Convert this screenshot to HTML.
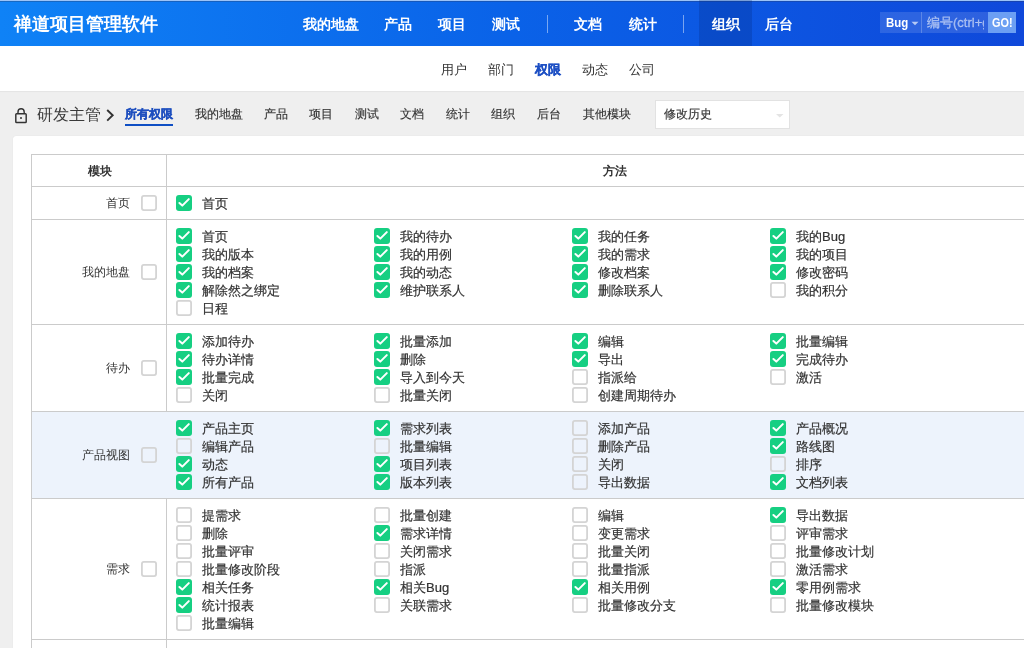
<!DOCTYPE html>
<html><head><meta charset="utf-8">
<style>
*{margin:0;padding:0;box-sizing:border-box}
html,body{width:1024px;height:648px;overflow:hidden;background:#efefef;font-family:"Liberation Sans",sans-serif;color:#333}
.a{position:absolute;white-space:nowrap}
#hdr{position:absolute;left:0;top:0;width:1024px;height:46px;background:linear-gradient(90deg,#0f82f6 0%,#0a62e8 50%,#0f48da 100%)}
#hdr .top1{position:absolute;left:0;top:0;width:1024px;height:1px;background:#9cc3f7}
#hdr .top2{position:absolute;left:0;top:1px;width:1024px;height:1px;background:rgba(40,60,100,.35)}
.brand{position:absolute;left:14px;top:13px;font-size:18px;font-weight:bold;color:#fff;line-height:22px}
.nav{position:absolute;top:15px;font-size:14px;font-weight:bold;color:#fff;line-height:18px}
.sep{position:absolute;top:15px;width:1px;height:18px;background:rgba(255,255,255,.45)}
.act{position:absolute;left:699px;top:0;width:53px;height:46px;background:rgba(0,30,110,.22)}
#sub{position:absolute;left:0;top:46px;width:1024px;height:45px;background:#fff;box-shadow:0 1px 1px rgba(0,0,0,.04)}
.sn{position:absolute;top:61px;font-size:13px;line-height:17px;color:#333}
.sn.on{color:#1e50c4;font-weight:bold;-webkit-text-stroke:.3px #1e50c4}
.tb{position:absolute;top:106px;font-size:12px;line-height:16px;color:#333;-webkit-text-stroke:.15px #333}
.tb.on{color:#1e4fbf;font-weight:bold;-webkit-text-stroke:.3px #1e4fbf}
.panel{position:absolute;left:13px;top:136px;width:1100px;height:600px;background:#fff;border-radius:3px;box-shadow:0 0 1px rgba(0,0,0,.12)}
.tbl{position:absolute;left:31px;top:154px;width:1100px;height:600px;border-left:1px solid #cbcbcb;border-top:1px solid #cbcbcb}
.vl{position:absolute;left:166px;top:154px;width:1px;height:600px;background:#cbcbcb}
.hl{position:absolute;left:31px;width:1100px;height:1px;background:#cbcbcb}
.rowbg{position:absolute;left:32px;width:1100px;background:#edf3fc}
.cb{position:absolute;width:16px;height:16px;display:block}
.cb.ck{border:0}
.cb svg{display:block}
.it{position:absolute;font-size:13px;line-height:18px;color:#333;white-space:nowrap;-webkit-text-stroke:.2px #333}
.mlab{position:absolute;right:894px;font-size:12px;line-height:18px;color:#333;white-space:nowrap}
.th{position:absolute;top:162px;font-size:12px;font-weight:bold;line-height:18px;color:#333}
#wrap{position:absolute;left:0;top:0;width:1024px;height:648px;overflow:hidden;will-change:transform}
</style></head><body><div id="wrap">
<div id="hdr"><div class="top1"></div><div class="top2"></div>
<div class="act"></div>
<div class="brand">禅道项目管理软件</div>
<div class="nav" style="left:303px">我的地盘</div>
<div class="nav" style="left:384px">产品</div>
<div class="nav" style="left:438px">项目</div>
<div class="nav" style="left:492px">测试</div>
<div class="sep" style="left:547px"></div>
<div class="nav" style="left:574px">文档</div>
<div class="nav" style="left:629px">统计</div>
<div class="sep" style="left:683px"></div>
<div class="nav" style="left:712px">组织</div>
<div class="nav" style="left:765px">后台</div>
</div>
<div id="sub"></div>
<div class="sn" style="left:441px">用户</div>
<div class="sn" style="left:488px">部门</div>
<div class="sn on" style="left:535px">权限</div>
<div class="sn" style="left:582px">动态</div>
<div class="sn" style="left:629px">公司</div>

<div class="tb" style="left:37px;top:105px;font-size:16px;line-height:20px;color:#3a3a3a;-webkit-text-stroke:0">研发主管</div>
<div class="tb on" style="left:125px">所有权限</div>
<div class="a" style="left:125px;top:124px;width:48px;height:2px;background:#0f4fc4"></div>
<div class="tb" style="left:195px">我的地盘</div>
<div class="tb" style="left:264px">产品</div>
<div class="tb" style="left:309px">项目</div>
<div class="tb" style="left:355px">测试</div>
<div class="tb" style="left:400px">文档</div>
<div class="tb" style="left:446px">统计</div>
<div class="tb" style="left:491px">组织</div>
<div class="tb" style="left:537px">后台</div>
<div class="tb" style="left:583px">其他模块</div>
<div class="a" style="left:655px;top:100px;width:135px;height:29px;background:#fff;border:1px solid #e2e2e2"></div>
<div class="tb" style="left:664px">修改历史</div>

<div class="panel"></div>
<div class="tbl"></div>
<div class="vl"></div>
<div class="hl" style="top:186px"></div>
<div class="th" style="left:88px">模块</div>
<div class="th" style="left:603px">方法</div>
<div class="hl" style="top:219px"></div>
<span class="mlab" style="top:194.0px">首页</span>
<i class="cb" style="left:141px;top:195px"><svg width="16" height="16" viewBox="0 0 16 16"><rect x="0.9" y="0.9" width="14.2" height="14.2" rx="2" fill="none" stroke="#d4d4d4" stroke-width="1.8"/></svg></i>
<i class="cb ck" style="left:176px;top:195px"><svg width="16" height="16" viewBox="0 0 16 16"><rect width="16" height="16" rx="3" fill="#16cf82"/><polyline points="3.4,8 6.3,10.6 12.8,4.1" fill="none" stroke="#fff" stroke-width="2" stroke-linecap="round" stroke-linejoin="round"/></svg></i>
<span class="it" style="left:202px;top:195px">首页</span>
<div class="hl" style="top:324px"></div>
<span class="mlab" style="top:263.0px">我的地盘</span>
<i class="cb" style="left:141px;top:264px"><svg width="16" height="16" viewBox="0 0 16 16"><rect x="0.9" y="0.9" width="14.2" height="14.2" rx="2" fill="none" stroke="#d4d4d4" stroke-width="1.8"/></svg></i>
<i class="cb ck" style="left:176px;top:228px"><svg width="16" height="16" viewBox="0 0 16 16"><rect width="16" height="16" rx="3" fill="#16cf82"/><polyline points="3.4,8 6.3,10.6 12.8,4.1" fill="none" stroke="#fff" stroke-width="2" stroke-linecap="round" stroke-linejoin="round"/></svg></i>
<span class="it" style="left:202px;top:228px">首页</span>
<i class="cb ck" style="left:374px;top:228px"><svg width="16" height="16" viewBox="0 0 16 16"><rect width="16" height="16" rx="3" fill="#16cf82"/><polyline points="3.4,8 6.3,10.6 12.8,4.1" fill="none" stroke="#fff" stroke-width="2" stroke-linecap="round" stroke-linejoin="round"/></svg></i>
<span class="it" style="left:400px;top:228px">我的待办</span>
<i class="cb ck" style="left:572px;top:228px"><svg width="16" height="16" viewBox="0 0 16 16"><rect width="16" height="16" rx="3" fill="#16cf82"/><polyline points="3.4,8 6.3,10.6 12.8,4.1" fill="none" stroke="#fff" stroke-width="2" stroke-linecap="round" stroke-linejoin="round"/></svg></i>
<span class="it" style="left:598px;top:228px">我的任务</span>
<i class="cb ck" style="left:770px;top:228px"><svg width="16" height="16" viewBox="0 0 16 16"><rect width="16" height="16" rx="3" fill="#16cf82"/><polyline points="3.4,8 6.3,10.6 12.8,4.1" fill="none" stroke="#fff" stroke-width="2" stroke-linecap="round" stroke-linejoin="round"/></svg></i>
<span class="it" style="left:796px;top:228px">我的Bug</span>
<i class="cb ck" style="left:176px;top:246px"><svg width="16" height="16" viewBox="0 0 16 16"><rect width="16" height="16" rx="3" fill="#16cf82"/><polyline points="3.4,8 6.3,10.6 12.8,4.1" fill="none" stroke="#fff" stroke-width="2" stroke-linecap="round" stroke-linejoin="round"/></svg></i>
<span class="it" style="left:202px;top:246px">我的版本</span>
<i class="cb ck" style="left:374px;top:246px"><svg width="16" height="16" viewBox="0 0 16 16"><rect width="16" height="16" rx="3" fill="#16cf82"/><polyline points="3.4,8 6.3,10.6 12.8,4.1" fill="none" stroke="#fff" stroke-width="2" stroke-linecap="round" stroke-linejoin="round"/></svg></i>
<span class="it" style="left:400px;top:246px">我的用例</span>
<i class="cb ck" style="left:572px;top:246px"><svg width="16" height="16" viewBox="0 0 16 16"><rect width="16" height="16" rx="3" fill="#16cf82"/><polyline points="3.4,8 6.3,10.6 12.8,4.1" fill="none" stroke="#fff" stroke-width="2" stroke-linecap="round" stroke-linejoin="round"/></svg></i>
<span class="it" style="left:598px;top:246px">我的需求</span>
<i class="cb ck" style="left:770px;top:246px"><svg width="16" height="16" viewBox="0 0 16 16"><rect width="16" height="16" rx="3" fill="#16cf82"/><polyline points="3.4,8 6.3,10.6 12.8,4.1" fill="none" stroke="#fff" stroke-width="2" stroke-linecap="round" stroke-linejoin="round"/></svg></i>
<span class="it" style="left:796px;top:246px">我的项目</span>
<i class="cb ck" style="left:176px;top:264px"><svg width="16" height="16" viewBox="0 0 16 16"><rect width="16" height="16" rx="3" fill="#16cf82"/><polyline points="3.4,8 6.3,10.6 12.8,4.1" fill="none" stroke="#fff" stroke-width="2" stroke-linecap="round" stroke-linejoin="round"/></svg></i>
<span class="it" style="left:202px;top:264px">我的档案</span>
<i class="cb ck" style="left:374px;top:264px"><svg width="16" height="16" viewBox="0 0 16 16"><rect width="16" height="16" rx="3" fill="#16cf82"/><polyline points="3.4,8 6.3,10.6 12.8,4.1" fill="none" stroke="#fff" stroke-width="2" stroke-linecap="round" stroke-linejoin="round"/></svg></i>
<span class="it" style="left:400px;top:264px">我的动态</span>
<i class="cb ck" style="left:572px;top:264px"><svg width="16" height="16" viewBox="0 0 16 16"><rect width="16" height="16" rx="3" fill="#16cf82"/><polyline points="3.4,8 6.3,10.6 12.8,4.1" fill="none" stroke="#fff" stroke-width="2" stroke-linecap="round" stroke-linejoin="round"/></svg></i>
<span class="it" style="left:598px;top:264px">修改档案</span>
<i class="cb ck" style="left:770px;top:264px"><svg width="16" height="16" viewBox="0 0 16 16"><rect width="16" height="16" rx="3" fill="#16cf82"/><polyline points="3.4,8 6.3,10.6 12.8,4.1" fill="none" stroke="#fff" stroke-width="2" stroke-linecap="round" stroke-linejoin="round"/></svg></i>
<span class="it" style="left:796px;top:264px">修改密码</span>
<i class="cb ck" style="left:176px;top:282px"><svg width="16" height="16" viewBox="0 0 16 16"><rect width="16" height="16" rx="3" fill="#16cf82"/><polyline points="3.4,8 6.3,10.6 12.8,4.1" fill="none" stroke="#fff" stroke-width="2" stroke-linecap="round" stroke-linejoin="round"/></svg></i>
<span class="it" style="left:202px;top:282px">解除然之绑定</span>
<i class="cb ck" style="left:374px;top:282px"><svg width="16" height="16" viewBox="0 0 16 16"><rect width="16" height="16" rx="3" fill="#16cf82"/><polyline points="3.4,8 6.3,10.6 12.8,4.1" fill="none" stroke="#fff" stroke-width="2" stroke-linecap="round" stroke-linejoin="round"/></svg></i>
<span class="it" style="left:400px;top:282px">维护联系人</span>
<i class="cb ck" style="left:572px;top:282px"><svg width="16" height="16" viewBox="0 0 16 16"><rect width="16" height="16" rx="3" fill="#16cf82"/><polyline points="3.4,8 6.3,10.6 12.8,4.1" fill="none" stroke="#fff" stroke-width="2" stroke-linecap="round" stroke-linejoin="round"/></svg></i>
<span class="it" style="left:598px;top:282px">删除联系人</span>
<i class="cb" style="left:770px;top:282px"><svg width="16" height="16" viewBox="0 0 16 16"><rect x="0.9" y="0.9" width="14.2" height="14.2" rx="2" fill="none" stroke="#d4d4d4" stroke-width="1.8"/></svg></i>
<span class="it" style="left:796px;top:282px">我的积分</span>
<i class="cb" style="left:176px;top:300px"><svg width="16" height="16" viewBox="0 0 16 16"><rect x="0.9" y="0.9" width="14.2" height="14.2" rx="2" fill="none" stroke="#d4d4d4" stroke-width="1.8"/></svg></i>
<span class="it" style="left:202px;top:300px">日程</span>
<div class="hl" style="top:411px"></div>
<span class="mlab" style="top:359.0px">待办</span>
<i class="cb" style="left:141px;top:360px"><svg width="16" height="16" viewBox="0 0 16 16"><rect x="0.9" y="0.9" width="14.2" height="14.2" rx="2" fill="none" stroke="#d4d4d4" stroke-width="1.8"/></svg></i>
<i class="cb ck" style="left:176px;top:333px"><svg width="16" height="16" viewBox="0 0 16 16"><rect width="16" height="16" rx="3" fill="#16cf82"/><polyline points="3.4,8 6.3,10.6 12.8,4.1" fill="none" stroke="#fff" stroke-width="2" stroke-linecap="round" stroke-linejoin="round"/></svg></i>
<span class="it" style="left:202px;top:333px">添加待办</span>
<i class="cb ck" style="left:374px;top:333px"><svg width="16" height="16" viewBox="0 0 16 16"><rect width="16" height="16" rx="3" fill="#16cf82"/><polyline points="3.4,8 6.3,10.6 12.8,4.1" fill="none" stroke="#fff" stroke-width="2" stroke-linecap="round" stroke-linejoin="round"/></svg></i>
<span class="it" style="left:400px;top:333px">批量添加</span>
<i class="cb ck" style="left:572px;top:333px"><svg width="16" height="16" viewBox="0 0 16 16"><rect width="16" height="16" rx="3" fill="#16cf82"/><polyline points="3.4,8 6.3,10.6 12.8,4.1" fill="none" stroke="#fff" stroke-width="2" stroke-linecap="round" stroke-linejoin="round"/></svg></i>
<span class="it" style="left:598px;top:333px">编辑</span>
<i class="cb ck" style="left:770px;top:333px"><svg width="16" height="16" viewBox="0 0 16 16"><rect width="16" height="16" rx="3" fill="#16cf82"/><polyline points="3.4,8 6.3,10.6 12.8,4.1" fill="none" stroke="#fff" stroke-width="2" stroke-linecap="round" stroke-linejoin="round"/></svg></i>
<span class="it" style="left:796px;top:333px">批量编辑</span>
<i class="cb ck" style="left:176px;top:351px"><svg width="16" height="16" viewBox="0 0 16 16"><rect width="16" height="16" rx="3" fill="#16cf82"/><polyline points="3.4,8 6.3,10.6 12.8,4.1" fill="none" stroke="#fff" stroke-width="2" stroke-linecap="round" stroke-linejoin="round"/></svg></i>
<span class="it" style="left:202px;top:351px">待办详情</span>
<i class="cb ck" style="left:374px;top:351px"><svg width="16" height="16" viewBox="0 0 16 16"><rect width="16" height="16" rx="3" fill="#16cf82"/><polyline points="3.4,8 6.3,10.6 12.8,4.1" fill="none" stroke="#fff" stroke-width="2" stroke-linecap="round" stroke-linejoin="round"/></svg></i>
<span class="it" style="left:400px;top:351px">删除</span>
<i class="cb ck" style="left:572px;top:351px"><svg width="16" height="16" viewBox="0 0 16 16"><rect width="16" height="16" rx="3" fill="#16cf82"/><polyline points="3.4,8 6.3,10.6 12.8,4.1" fill="none" stroke="#fff" stroke-width="2" stroke-linecap="round" stroke-linejoin="round"/></svg></i>
<span class="it" style="left:598px;top:351px">导出</span>
<i class="cb ck" style="left:770px;top:351px"><svg width="16" height="16" viewBox="0 0 16 16"><rect width="16" height="16" rx="3" fill="#16cf82"/><polyline points="3.4,8 6.3,10.6 12.8,4.1" fill="none" stroke="#fff" stroke-width="2" stroke-linecap="round" stroke-linejoin="round"/></svg></i>
<span class="it" style="left:796px;top:351px">完成待办</span>
<i class="cb ck" style="left:176px;top:369px"><svg width="16" height="16" viewBox="0 0 16 16"><rect width="16" height="16" rx="3" fill="#16cf82"/><polyline points="3.4,8 6.3,10.6 12.8,4.1" fill="none" stroke="#fff" stroke-width="2" stroke-linecap="round" stroke-linejoin="round"/></svg></i>
<span class="it" style="left:202px;top:369px">批量完成</span>
<i class="cb ck" style="left:374px;top:369px"><svg width="16" height="16" viewBox="0 0 16 16"><rect width="16" height="16" rx="3" fill="#16cf82"/><polyline points="3.4,8 6.3,10.6 12.8,4.1" fill="none" stroke="#fff" stroke-width="2" stroke-linecap="round" stroke-linejoin="round"/></svg></i>
<span class="it" style="left:400px;top:369px">导入到今天</span>
<i class="cb" style="left:572px;top:369px"><svg width="16" height="16" viewBox="0 0 16 16"><rect x="0.9" y="0.9" width="14.2" height="14.2" rx="2" fill="none" stroke="#d4d4d4" stroke-width="1.8"/></svg></i>
<span class="it" style="left:598px;top:369px">指派给</span>
<i class="cb" style="left:770px;top:369px"><svg width="16" height="16" viewBox="0 0 16 16"><rect x="0.9" y="0.9" width="14.2" height="14.2" rx="2" fill="none" stroke="#d4d4d4" stroke-width="1.8"/></svg></i>
<span class="it" style="left:796px;top:369px">激活</span>
<i class="cb" style="left:176px;top:387px"><svg width="16" height="16" viewBox="0 0 16 16"><rect x="0.9" y="0.9" width="14.2" height="14.2" rx="2" fill="none" stroke="#d4d4d4" stroke-width="1.8"/></svg></i>
<span class="it" style="left:202px;top:387px">关闭</span>
<i class="cb" style="left:374px;top:387px"><svg width="16" height="16" viewBox="0 0 16 16"><rect x="0.9" y="0.9" width="14.2" height="14.2" rx="2" fill="none" stroke="#d4d4d4" stroke-width="1.8"/></svg></i>
<span class="it" style="left:400px;top:387px">批量关闭</span>
<i class="cb" style="left:572px;top:387px"><svg width="16" height="16" viewBox="0 0 16 16"><rect x="0.9" y="0.9" width="14.2" height="14.2" rx="2" fill="none" stroke="#d4d4d4" stroke-width="1.8"/></svg></i>
<span class="it" style="left:598px;top:387px">创建周期待办</span>
<div class="rowbg" style="top:412px;height:86px"></div>
<div class="hl" style="top:498px"></div>
<span class="mlab" style="top:446.0px">产品视图</span>
<i class="cb" style="left:141px;top:447px"><svg width="16" height="16" viewBox="0 0 16 16"><rect x="0.9" y="0.9" width="14.2" height="14.2" rx="2" fill="none" stroke="#d4d4d4" stroke-width="1.8"/></svg></i>
<i class="cb ck" style="left:176px;top:420px"><svg width="16" height="16" viewBox="0 0 16 16"><rect width="16" height="16" rx="3" fill="#16cf82"/><polyline points="3.4,8 6.3,10.6 12.8,4.1" fill="none" stroke="#fff" stroke-width="2" stroke-linecap="round" stroke-linejoin="round"/></svg></i>
<span class="it" style="left:202px;top:420px">产品主页</span>
<i class="cb ck" style="left:374px;top:420px"><svg width="16" height="16" viewBox="0 0 16 16"><rect width="16" height="16" rx="3" fill="#16cf82"/><polyline points="3.4,8 6.3,10.6 12.8,4.1" fill="none" stroke="#fff" stroke-width="2" stroke-linecap="round" stroke-linejoin="round"/></svg></i>
<span class="it" style="left:400px;top:420px">需求列表</span>
<i class="cb" style="left:572px;top:420px"><svg width="16" height="16" viewBox="0 0 16 16"><rect x="0.9" y="0.9" width="14.2" height="14.2" rx="2" fill="none" stroke="#d4d4d4" stroke-width="1.8"/></svg></i>
<span class="it" style="left:598px;top:420px">添加产品</span>
<i class="cb ck" style="left:770px;top:420px"><svg width="16" height="16" viewBox="0 0 16 16"><rect width="16" height="16" rx="3" fill="#16cf82"/><polyline points="3.4,8 6.3,10.6 12.8,4.1" fill="none" stroke="#fff" stroke-width="2" stroke-linecap="round" stroke-linejoin="round"/></svg></i>
<span class="it" style="left:796px;top:420px">产品概况</span>
<i class="cb" style="left:176px;top:438px"><svg width="16" height="16" viewBox="0 0 16 16"><rect x="0.9" y="0.9" width="14.2" height="14.2" rx="2" fill="none" stroke="#d4d4d4" stroke-width="1.8"/></svg></i>
<span class="it" style="left:202px;top:438px">编辑产品</span>
<i class="cb" style="left:374px;top:438px"><svg width="16" height="16" viewBox="0 0 16 16"><rect x="0.9" y="0.9" width="14.2" height="14.2" rx="2" fill="none" stroke="#d4d4d4" stroke-width="1.8"/></svg></i>
<span class="it" style="left:400px;top:438px">批量编辑</span>
<i class="cb" style="left:572px;top:438px"><svg width="16" height="16" viewBox="0 0 16 16"><rect x="0.9" y="0.9" width="14.2" height="14.2" rx="2" fill="none" stroke="#d4d4d4" stroke-width="1.8"/></svg></i>
<span class="it" style="left:598px;top:438px">删除产品</span>
<i class="cb ck" style="left:770px;top:438px"><svg width="16" height="16" viewBox="0 0 16 16"><rect width="16" height="16" rx="3" fill="#16cf82"/><polyline points="3.4,8 6.3,10.6 12.8,4.1" fill="none" stroke="#fff" stroke-width="2" stroke-linecap="round" stroke-linejoin="round"/></svg></i>
<span class="it" style="left:796px;top:438px">路线图</span>
<i class="cb ck" style="left:176px;top:456px"><svg width="16" height="16" viewBox="0 0 16 16"><rect width="16" height="16" rx="3" fill="#16cf82"/><polyline points="3.4,8 6.3,10.6 12.8,4.1" fill="none" stroke="#fff" stroke-width="2" stroke-linecap="round" stroke-linejoin="round"/></svg></i>
<span class="it" style="left:202px;top:456px">动态</span>
<i class="cb ck" style="left:374px;top:456px"><svg width="16" height="16" viewBox="0 0 16 16"><rect width="16" height="16" rx="3" fill="#16cf82"/><polyline points="3.4,8 6.3,10.6 12.8,4.1" fill="none" stroke="#fff" stroke-width="2" stroke-linecap="round" stroke-linejoin="round"/></svg></i>
<span class="it" style="left:400px;top:456px">项目列表</span>
<i class="cb" style="left:572px;top:456px"><svg width="16" height="16" viewBox="0 0 16 16"><rect x="0.9" y="0.9" width="14.2" height="14.2" rx="2" fill="none" stroke="#d4d4d4" stroke-width="1.8"/></svg></i>
<span class="it" style="left:598px;top:456px">关闭</span>
<i class="cb" style="left:770px;top:456px"><svg width="16" height="16" viewBox="0 0 16 16"><rect x="0.9" y="0.9" width="14.2" height="14.2" rx="2" fill="none" stroke="#d4d4d4" stroke-width="1.8"/></svg></i>
<span class="it" style="left:796px;top:456px">排序</span>
<i class="cb ck" style="left:176px;top:474px"><svg width="16" height="16" viewBox="0 0 16 16"><rect width="16" height="16" rx="3" fill="#16cf82"/><polyline points="3.4,8 6.3,10.6 12.8,4.1" fill="none" stroke="#fff" stroke-width="2" stroke-linecap="round" stroke-linejoin="round"/></svg></i>
<span class="it" style="left:202px;top:474px">所有产品</span>
<i class="cb ck" style="left:374px;top:474px"><svg width="16" height="16" viewBox="0 0 16 16"><rect width="16" height="16" rx="3" fill="#16cf82"/><polyline points="3.4,8 6.3,10.6 12.8,4.1" fill="none" stroke="#fff" stroke-width="2" stroke-linecap="round" stroke-linejoin="round"/></svg></i>
<span class="it" style="left:400px;top:474px">版本列表</span>
<i class="cb" style="left:572px;top:474px"><svg width="16" height="16" viewBox="0 0 16 16"><rect x="0.9" y="0.9" width="14.2" height="14.2" rx="2" fill="none" stroke="#d4d4d4" stroke-width="1.8"/></svg></i>
<span class="it" style="left:598px;top:474px">导出数据</span>
<i class="cb ck" style="left:770px;top:474px"><svg width="16" height="16" viewBox="0 0 16 16"><rect width="16" height="16" rx="3" fill="#16cf82"/><polyline points="3.4,8 6.3,10.6 12.8,4.1" fill="none" stroke="#fff" stroke-width="2" stroke-linecap="round" stroke-linejoin="round"/></svg></i>
<span class="it" style="left:796px;top:474px">文档列表</span>
<div class="hl" style="top:639px"></div>
<span class="mlab" style="top:560.0px">需求</span>
<i class="cb" style="left:141px;top:561px"><svg width="16" height="16" viewBox="0 0 16 16"><rect x="0.9" y="0.9" width="14.2" height="14.2" rx="2" fill="none" stroke="#d4d4d4" stroke-width="1.8"/></svg></i>
<i class="cb" style="left:176px;top:507px"><svg width="16" height="16" viewBox="0 0 16 16"><rect x="0.9" y="0.9" width="14.2" height="14.2" rx="2" fill="none" stroke="#d4d4d4" stroke-width="1.8"/></svg></i>
<span class="it" style="left:202px;top:507px">提需求</span>
<i class="cb" style="left:374px;top:507px"><svg width="16" height="16" viewBox="0 0 16 16"><rect x="0.9" y="0.9" width="14.2" height="14.2" rx="2" fill="none" stroke="#d4d4d4" stroke-width="1.8"/></svg></i>
<span class="it" style="left:400px;top:507px">批量创建</span>
<i class="cb" style="left:572px;top:507px"><svg width="16" height="16" viewBox="0 0 16 16"><rect x="0.9" y="0.9" width="14.2" height="14.2" rx="2" fill="none" stroke="#d4d4d4" stroke-width="1.8"/></svg></i>
<span class="it" style="left:598px;top:507px">编辑</span>
<i class="cb ck" style="left:770px;top:507px"><svg width="16" height="16" viewBox="0 0 16 16"><rect width="16" height="16" rx="3" fill="#16cf82"/><polyline points="3.4,8 6.3,10.6 12.8,4.1" fill="none" stroke="#fff" stroke-width="2" stroke-linecap="round" stroke-linejoin="round"/></svg></i>
<span class="it" style="left:796px;top:507px">导出数据</span>
<i class="cb" style="left:176px;top:525px"><svg width="16" height="16" viewBox="0 0 16 16"><rect x="0.9" y="0.9" width="14.2" height="14.2" rx="2" fill="none" stroke="#d4d4d4" stroke-width="1.8"/></svg></i>
<span class="it" style="left:202px;top:525px">删除</span>
<i class="cb ck" style="left:374px;top:525px"><svg width="16" height="16" viewBox="0 0 16 16"><rect width="16" height="16" rx="3" fill="#16cf82"/><polyline points="3.4,8 6.3,10.6 12.8,4.1" fill="none" stroke="#fff" stroke-width="2" stroke-linecap="round" stroke-linejoin="round"/></svg></i>
<span class="it" style="left:400px;top:525px">需求详情</span>
<i class="cb" style="left:572px;top:525px"><svg width="16" height="16" viewBox="0 0 16 16"><rect x="0.9" y="0.9" width="14.2" height="14.2" rx="2" fill="none" stroke="#d4d4d4" stroke-width="1.8"/></svg></i>
<span class="it" style="left:598px;top:525px">变更需求</span>
<i class="cb" style="left:770px;top:525px"><svg width="16" height="16" viewBox="0 0 16 16"><rect x="0.9" y="0.9" width="14.2" height="14.2" rx="2" fill="none" stroke="#d4d4d4" stroke-width="1.8"/></svg></i>
<span class="it" style="left:796px;top:525px">评审需求</span>
<i class="cb" style="left:176px;top:543px"><svg width="16" height="16" viewBox="0 0 16 16"><rect x="0.9" y="0.9" width="14.2" height="14.2" rx="2" fill="none" stroke="#d4d4d4" stroke-width="1.8"/></svg></i>
<span class="it" style="left:202px;top:543px">批量评审</span>
<i class="cb" style="left:374px;top:543px"><svg width="16" height="16" viewBox="0 0 16 16"><rect x="0.9" y="0.9" width="14.2" height="14.2" rx="2" fill="none" stroke="#d4d4d4" stroke-width="1.8"/></svg></i>
<span class="it" style="left:400px;top:543px">关闭需求</span>
<i class="cb" style="left:572px;top:543px"><svg width="16" height="16" viewBox="0 0 16 16"><rect x="0.9" y="0.9" width="14.2" height="14.2" rx="2" fill="none" stroke="#d4d4d4" stroke-width="1.8"/></svg></i>
<span class="it" style="left:598px;top:543px">批量关闭</span>
<i class="cb" style="left:770px;top:543px"><svg width="16" height="16" viewBox="0 0 16 16"><rect x="0.9" y="0.9" width="14.2" height="14.2" rx="2" fill="none" stroke="#d4d4d4" stroke-width="1.8"/></svg></i>
<span class="it" style="left:796px;top:543px">批量修改计划</span>
<i class="cb" style="left:176px;top:561px"><svg width="16" height="16" viewBox="0 0 16 16"><rect x="0.9" y="0.9" width="14.2" height="14.2" rx="2" fill="none" stroke="#d4d4d4" stroke-width="1.8"/></svg></i>
<span class="it" style="left:202px;top:561px">批量修改阶段</span>
<i class="cb" style="left:374px;top:561px"><svg width="16" height="16" viewBox="0 0 16 16"><rect x="0.9" y="0.9" width="14.2" height="14.2" rx="2" fill="none" stroke="#d4d4d4" stroke-width="1.8"/></svg></i>
<span class="it" style="left:400px;top:561px">指派</span>
<i class="cb" style="left:572px;top:561px"><svg width="16" height="16" viewBox="0 0 16 16"><rect x="0.9" y="0.9" width="14.2" height="14.2" rx="2" fill="none" stroke="#d4d4d4" stroke-width="1.8"/></svg></i>
<span class="it" style="left:598px;top:561px">批量指派</span>
<i class="cb" style="left:770px;top:561px"><svg width="16" height="16" viewBox="0 0 16 16"><rect x="0.9" y="0.9" width="14.2" height="14.2" rx="2" fill="none" stroke="#d4d4d4" stroke-width="1.8"/></svg></i>
<span class="it" style="left:796px;top:561px">激活需求</span>
<i class="cb ck" style="left:176px;top:579px"><svg width="16" height="16" viewBox="0 0 16 16"><rect width="16" height="16" rx="3" fill="#16cf82"/><polyline points="3.4,8 6.3,10.6 12.8,4.1" fill="none" stroke="#fff" stroke-width="2" stroke-linecap="round" stroke-linejoin="round"/></svg></i>
<span class="it" style="left:202px;top:579px">相关任务</span>
<i class="cb ck" style="left:374px;top:579px"><svg width="16" height="16" viewBox="0 0 16 16"><rect width="16" height="16" rx="3" fill="#16cf82"/><polyline points="3.4,8 6.3,10.6 12.8,4.1" fill="none" stroke="#fff" stroke-width="2" stroke-linecap="round" stroke-linejoin="round"/></svg></i>
<span class="it" style="left:400px;top:579px">相关Bug</span>
<i class="cb ck" style="left:572px;top:579px"><svg width="16" height="16" viewBox="0 0 16 16"><rect width="16" height="16" rx="3" fill="#16cf82"/><polyline points="3.4,8 6.3,10.6 12.8,4.1" fill="none" stroke="#fff" stroke-width="2" stroke-linecap="round" stroke-linejoin="round"/></svg></i>
<span class="it" style="left:598px;top:579px">相关用例</span>
<i class="cb ck" style="left:770px;top:579px"><svg width="16" height="16" viewBox="0 0 16 16"><rect width="16" height="16" rx="3" fill="#16cf82"/><polyline points="3.4,8 6.3,10.6 12.8,4.1" fill="none" stroke="#fff" stroke-width="2" stroke-linecap="round" stroke-linejoin="round"/></svg></i>
<span class="it" style="left:796px;top:579px">零用例需求</span>
<i class="cb ck" style="left:176px;top:597px"><svg width="16" height="16" viewBox="0 0 16 16"><rect width="16" height="16" rx="3" fill="#16cf82"/><polyline points="3.4,8 6.3,10.6 12.8,4.1" fill="none" stroke="#fff" stroke-width="2" stroke-linecap="round" stroke-linejoin="round"/></svg></i>
<span class="it" style="left:202px;top:597px">统计报表</span>
<i class="cb" style="left:374px;top:597px"><svg width="16" height="16" viewBox="0 0 16 16"><rect x="0.9" y="0.9" width="14.2" height="14.2" rx="2" fill="none" stroke="#d4d4d4" stroke-width="1.8"/></svg></i>
<span class="it" style="left:400px;top:597px">关联需求</span>
<i class="cb" style="left:572px;top:597px"><svg width="16" height="16" viewBox="0 0 16 16"><rect x="0.9" y="0.9" width="14.2" height="14.2" rx="2" fill="none" stroke="#d4d4d4" stroke-width="1.8"/></svg></i>
<span class="it" style="left:598px;top:597px">批量修改分支</span>
<i class="cb" style="left:770px;top:597px"><svg width="16" height="16" viewBox="0 0 16 16"><rect x="0.9" y="0.9" width="14.2" height="14.2" rx="2" fill="none" stroke="#d4d4d4" stroke-width="1.8"/></svg></i>
<span class="it" style="left:796px;top:597px">批量修改模块</span>
<i class="cb" style="left:176px;top:615px"><svg width="16" height="16" viewBox="0 0 16 16"><rect x="0.9" y="0.9" width="14.2" height="14.2" rx="2" fill="none" stroke="#d4d4d4" stroke-width="1.8"/></svg></i>
<span class="it" style="left:202px;top:615px">批量编辑</span>
<div class="hl" style="top:672px"></div>

<div class="a" style="left:880px;top:12px;width:108px;height:21px;background:rgba(255,255,255,.13)"></div>
<div class="a" style="left:921px;top:12px;width:1px;height:21px;background:rgba(255,255,255,.22)"></div>
<div class="a" style="left:886px;top:14px;font-size:13px;font-weight:bold;color:#fff;line-height:17px;transform:scaleX(.88);transform-origin:0 0">Bug</div>
<svg class="a" style="left:911px;top:21px" width="8" height="5" viewBox="0 0 8 5"><polygon points="0.5,0.8 7.5,0.8 4,4.3" fill="rgba(255,255,255,.65)"/></svg>
<div class="a" style="left:927px;top:14px;width:57px;overflow:hidden;font-size:13px;color:rgba(255,255,255,.5);line-height:17px;-webkit-text-stroke:.3px rgba(255,255,255,.5)">编号(ctrl+g)</div>
<div class="a" style="left:988px;top:12px;width:28px;height:21px;background:#6c9ff3"></div>
<div class="a" style="left:992px;top:14px;font-size:13px;font-weight:bold;color:#fff;line-height:17px;transform:scaleX(.84);transform-origin:0 0">GO!</div>
<svg class="a" style="left:12px;top:105px" width="20" height="20" viewBox="12 105 20 20"><rect x="15.8" y="113.8" width="10.4" height="8.7" rx="0.8" fill="none" stroke="#333" stroke-width="1.45"/><path d="M18 113.8 V111.9 A3.1 3.1 0 0 1 24.2 111.9 V113.8" fill="none" stroke="#333" stroke-width="1.4"/><circle cx="21" cy="118.1" r="1" fill="#333"/></svg>
<svg class="a" style="left:104px;top:106px" width="12" height="18" viewBox="104 106 12 18"><polyline points="107.2,110 112.7,115.3 107.2,120.6" fill="none" stroke="#333" stroke-width="1.9"/></svg>
<svg class="a" style="left:774px;top:112px" width="12" height="8" viewBox="774 112 12 8"><polygon points="776,114 783.5,114 779.75,117.6" fill="#e4e4e4"/></svg>
</div></body></html>
